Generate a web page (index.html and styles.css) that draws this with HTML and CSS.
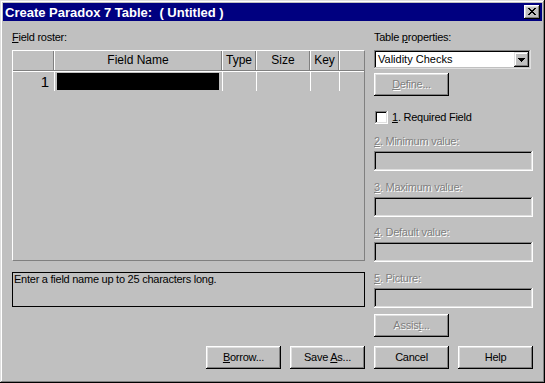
FILE: index.html
```html
<!DOCTYPE html>
<html>
<head>
<meta charset="utf-8">
<title>Create Paradox 7 Table</title>
<link rel="stylesheet" href="styles.css">
</head>
<body>
<div class="window">
  <div class="titlebar">
    <span class="title">Create Paradox 7 Table:  ( Untitled )</span>
    <span class="close"><svg width="8" height="7" viewBox="0 0 8 7"><path d="M0 0h2v1h1v1h2V1h1V0h2v1H7v1H6v1H5v1h1v1h1v1h1v1H6V6H5V5H3v1H2v1H0V6h1V5h1V4h1V3H2V2H1V1H0z" fill="#000"/></svg></span>
  </div>
  <div class="client">
    <div class="main">
      <div class="left">
        <div class="label"><u>F</u>ield roster:</div>
        <div class="grid">
          <div class="grow head">
            <div class="c c0"></div>
            <div class="c c1">Field Name</div>
            <div class="c c2">Type</div>
            <div class="c c3">Size</div>
            <div class="c c4">Key</div>
            <div class="c c5"></div>
          </div>
          <div class="grow body">
            <div class="c c0 num">1</div>
            <div class="c c1"><div class="sel"></div></div>
            <div class="c c2"></div>
            <div class="c c3"></div>
            <div class="c c4"></div>
            <div class="c c5"></div>
          </div>
        </div>
        <div class="status">Enter a field name up to 25 characters long.</div>
      </div>
      <div class="right">
        <div class="label">Table <u>p</u>roperties:</div>
        <div class="combo">
          <span class="combo-text">Validity Checks</span>
          <span class="combo-btn"><svg width="7" height="4" viewBox="0 0 7 4"><path d="M0 0h7v1H6v1H5v1H4v1H3V3H2V2H1V1H0z" fill="#000"/></svg></span>
        </div>
        <div class="btn dis define"><span class="dt"><u>D</u>efine...</span></div>
        <div class="check-row"><span class="checkbox"></span><span><u>1</u>. Required Field</span></div>
        <div class="prop p2"><div class="label dt"><u>2</u>. Minimum value:</div><div class="field"></div></div>
        <div class="prop p3"><div class="label dt"><u>3</u>. Maximum value:</div><div class="field"></div></div>
        <div class="prop p4"><div class="label dt"><u>4</u>. Default value:</div><div class="field"></div></div>
        <div class="prop p5"><div class="label dt"><u>5</u>. Picture:</div><div class="field"></div></div>
        <div class="btn dis assist"><span class="dt">Assis<u>t</u>...</span></div>
      </div>
    </div>
    <div class="buttons">
      <div class="btn"><span><u>B</u>orrow...</span></div>
      <div class="btn"><span>Save <u>A</u>s...</span></div>
      <div class="btn"><span>Cancel</span></div>
      <div class="btn"><span>Help</span></div>
    </div>
  </div>
</div>
</body>
</html>
```

FILE: styles.css
```css
* { box-sizing: border-box; }
html, body { margin: 0; padding: 0; }
body {
  width: 545px;
  height: 383px;
  overflow: hidden;
  background: #c0c0c0;
  font-family: "Liberation Sans", Arial, sans-serif;
  font-size: 11px;
  line-height: 13px;
  letter-spacing: -0.25px;
  color: #000;
}
u { text-decoration: underline; text-underline-offset: 1px; }

.window {
  width: 545px;
  height: 383px;
  padding: 3px;
  background: #c0c0c0;
  box-shadow: inset -1px -1px #000, inset 1px 1px #dfdfdf, inset -2px -2px #808080, inset 2px 2px #fff;
  display: flex;
  flex-direction: column;
}

.titlebar {
  height: 18px;
  background: #000080;
  color: #fff;
  display: flex;
  align-items: center;
  justify-content: space-between;
  padding: 0 2px;
}
.title {
  font-weight: bold;
  font-size: 13px;
  letter-spacing: 0;
  white-space: pre;
}
.close {
  width: 16px;
  height: 14px;
  background: #c0c0c0;
  box-shadow: inset -1px -1px #000, inset 1px 1px #fff, inset -2px -2px #808080, inset 2px 2px #dfdfdf;
  display: flex;
  align-items: center;
  justify-content: center;
  padding-bottom: 1px;
}
.close svg { display: block; }

.client {
  flex: 1;
  padding: 10px 9px 0 9px;
  display: flex;
  flex-direction: column;
}
.main {
  display: flex;
  justify-content: space-between;
}
.left { width: 353px; display: flex; flex-direction: column; }
.right { width: 159px; display: flex; flex-direction: column; }
.label { height: 13px; white-space: nowrap; }

/* grid */
.grid {
  margin-top: 6px;
  height: 211px;
  border-top: 1px solid #fff;
  border-left: 1px solid #fff;
  border-right: 1px solid #808080;
  border-bottom: 1px solid #808080;
}
.grow { display: flex; }
.grow.head { height: 20px; border-bottom: 1px solid #808080; }
.grow.body { height: 20px; border-top: 1px solid #fff; }
.c {
  height: 100%;
  text-align: center;
  font-size: 12px;
  letter-spacing: 0;
}
.c1, .c2, .c3, .c4, .c5 { border-left: 1px solid #fff; }
.head .c0, .head .c1, .head .c2, .head .c3, .head .c4 { border-right: 1px solid #808080; }
.c0 { width: 41px; }
.c1 { width: 168px; }
.c2 { width: 34px; }
.c3 { width: 54px; }
.c4 { width: 29px; }
.c5 { width: 24px; }
.head .c { padding-top: 3px; }
.num {
  text-align: right;
  padding-right: 5px;
  padding-top: 2px;
  font-size: 15px;
  line-height: 16px;
}
.sel { margin: 1px 3px 0 2px; height: 17px; background: #000; }

.status {
  margin-top: 11px;
  height: 35px;
  border: 1px solid #000;
  padding: 0 1px;
}

/* right panel */
.combo {
  margin-top: 6px;
  height: 19px;
  width: 157px;
  background: #fff;
  box-shadow: inset -1px -1px #dfdfdf, inset 1px 1px #808080, inset -2px -2px #c0c0c0, inset 2px 2px #000;
  display: flex;
  align-items: center;
  justify-content: space-between;
  padding: 2px;
}
.combo-text { padding-left: 2px; letter-spacing: 0; }
.combo-btn {
  width: 15px;
  height: 15px;
  background: #c0c0c0;
  box-shadow: inset -1px -1px #000, inset 1px 1px #dfdfdf, inset -2px -2px #808080, inset 2px 2px #fff;
  display: flex;
  align-items: center;
  justify-content: center;
}
.combo-btn svg { display: block; }

.btn {
  width: 75px;
  height: 23px;
  background: #c0c0c0;
  box-shadow: inset -1px -1px #000, inset 1px 1px #fff, inset -2px -2px #808080, inset 2px 2px #dfdfdf;
  display: flex;
  align-items: center;
  justify-content: center;
}
.dt { color: #808080; text-shadow: 1px 1px 0 #fff; }
.define { margin-top: 4px; }

.check-row {
  margin-top: 15px;
  height: 13px;
  display: flex;
  align-items: center;
  gap: 4px;
  white-space: nowrap;
}
.checkbox {
  width: 13px;
  height: 13px;
  background: #fff;
  box-shadow: inset -1px -1px #fff, inset 1px 1px #808080, inset -2px -2px #dfdfdf, inset 2px 2px #000;
  margin-left: 1px;
}

.prop { display: flex; flex-direction: column; }
.prop .label { margin-bottom: 3px; }
.p2 { margin-top: 11px; }
.p3 { margin-top: 10px; }
.p4 { margin-top: 9px; }
.p5 { margin-top: 10px; }
.field {
  height: 20px;
  width: 159px;
  box-shadow: inset -1px -1px #fff, inset 1px 1px #808080, inset -2px -2px #dfdfdf, inset 2px 2px #000;
}
.assist { margin-top: 6px; }

.buttons {
  margin-top: 9px;
  display: flex;
  justify-content: flex-end;
  gap: 9px;
}
```
